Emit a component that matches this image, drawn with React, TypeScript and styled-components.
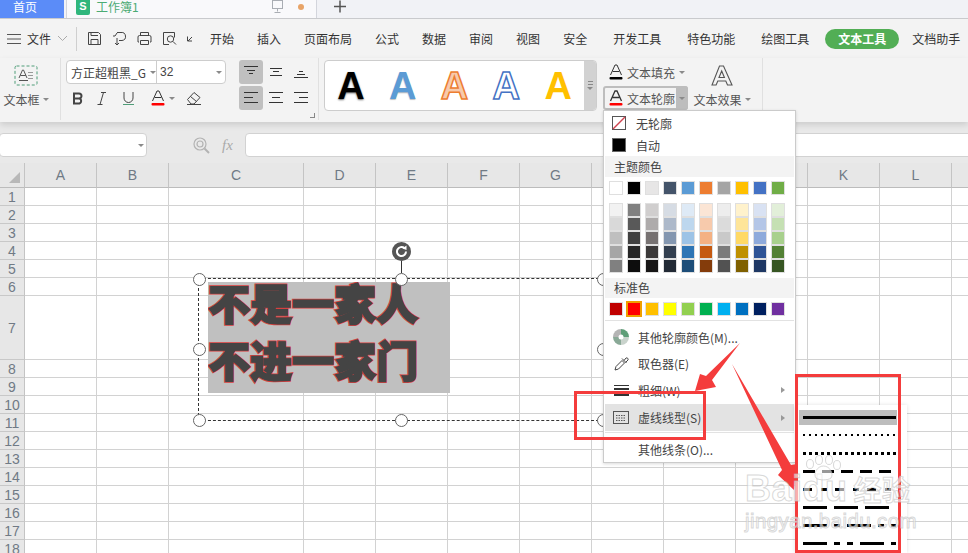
import React from 'react'
import styled, { createGlobalStyle } from 'styled-components'

const CJK = `"Noto Sans CJK SC", "Liberation Sans", sans-serif`

const GlobalStyle = createGlobalStyle`
  html, body { margin: 0; padding: 0; background: #fff; }
  * { box-sizing: border-box; }
`

const Root = styled.div`
  position: relative;
  width: 968px;
  height: 553px;
  overflow: hidden;
  background: #fff;
  font-family: ${CJK};
  font-size: 12px;
  color: #444;
`

/* title tabs */
const TabBar = styled.div`
  display: flex;
  height: 19px;
  background: #f1f2f6;
  border-bottom: 1px solid #c9cacd;
`
const HomeTab = styled.div`
  width: 64px;
  height: 18px;
  padding: 0 0 5px 13px;
  line-height: 13px;
  background: #5b8cf8;
  color: #fff;
  font-size: 12px;
`
const SheetTab = styled.div`
  display: flex;
  align-items: flex-start;
  width: 251px;
  height: 18px;
  margin-left: 2px;
  padding-left: 9px;
  background: #f9f9fb;
  border-left: 1px solid #d3d5dc;
  border-right: 1px solid #d3d5dc;
`
const SheetBadge = styled.span`
  width: 14px;
  height: 15px;
  border-radius: 0 0 2px 2px;
  background: #2fb67c;
  color: #fff;
  font: 700 11px/13px "Liberation Sans", sans-serif;
  text-align: center;
`
const SheetName = styled.span`
  margin-left: 6px;
  line-height: 13px;
  color: #4cab74;
`
const TabStatus = styled.div`
  display: flex;
  align-items: center;
  gap: 13px;
  height: 14px;
  margin-left: auto;
  margin-right: 12px;
`
const Dot = styled.span`
  width: 6px;
  height: 6px;
  border-radius: 50%;
  background: #e8a468;
`
const AddTab = styled.div`
  margin-left: 16px;
  width: 14px;
`

/* menu line */
const MenuBar = styled.div`
  display: flex;
  align-items: center;
  height: 39px;
  padding-left: 7px;
  background: #f3f3f3;
  color: #333;
`
const FileLabel = styled.span`
  margin-left: 6px;
  margin-right: 6px;
`
const MenuRule = styled.span`
  width: 1px;
  height: 24px;
  margin: 0 10px 0 8px;
  background: #cfcfcf;
`
const QuickBar = styled.div`
  display: flex;
  align-items: center;
  gap: 10px;
  margin-right: 15px;
`
const MenuTabs = styled.div<{ $gap: number; $lead?: number }>`
  display: flex;
  align-items: center;
  gap: ${p => p.$gap}px;
  margin-left: ${p => p.$lead ?? 0}px;
`
const ActiveTab = styled.span`
  margin: 0 13px 0 16px;
  width: 74px;
  height: 20px;
  border-radius: 10px;
  background: #52ae55;
  color: #fff;
  font-weight: 700;
  line-height: 20px;
  text-align: center;
`

/* ribbon */
const Ribbon = styled.div`
  position: relative;
  z-index: 1;
  display: flex;
  height: 64px;
  background: #f3f3f3;
  box-shadow: 0 3px 6px rgba(0, 0, 0, 0.12);
`
const RibbonGroup = styled.div<{ $width: number; $pad?: number }>`
  position: relative;
  display: flex;
  width: ${p => p.$width}px;
  height: 62px;
  padding-left: ${p => p.$pad ?? 0}px;
  padding-top: 2px;
  border-right: 1px solid #e0e0e0;
`
const BigTool = styled.div<{ $width: number; $lead?: number }>`
  display: flex;
  flex-direction: column;
  align-items: center;
  width: ${p => p.$width}px;
  margin-left: ${p => p.$lead ?? 0}px;
  padding-top: 5px;
  color: #555;
`
const BigLabel = styled.div`
  display: flex;
  align-items: center;
  gap: 3px;
  margin-top: 4px;
  height: 18px;
  white-space: nowrap;
`
const Caret = styled.span`
  flex: none;
  width: 0;
  height: 0;
  border-left: 3px solid transparent;
  border-right: 3px solid transparent;
  border-top: 3px solid #8a8a8a;
`
const FontColumn = styled.div`
  display: flex;
  flex-direction: column;
  width: 160px;
`
const FontSelect = styled.div`
  display: flex;
  align-items: center;
  height: 24px;
  background: #fff;
  border: 1px solid #cdcdcd;
  border-radius: 4px;
  overflow: hidden;
`
const FontName = styled.div`
  display: flex;
  align-items: center;
  gap: 4px;
  width: 90px;
  height: 22px;
  padding-left: 4px;
  border-right: 1px solid #cdcdcd;
  white-space: nowrap;
  color: #444;
`
const FontSize = styled.div`
  display: flex;
  align-items: center;
  justify-content: space-between;
  flex: 1;
  height: 22px;
  padding: 0 3px 0 3px;
  font-family: "Liberation Sans", sans-serif;
`
const FontTools = styled.div`
  display: flex;
  align-items: center;
  height: 26px;
  margin-top: 1px;
  padding-left: 6px;
`
const FontTool = styled.span<{ $width: number }>`
  display: flex;
  align-items: center;
  gap: 3px;
  width: ${p => p.$width}px;
`
const AlignGrid = styled.div`
  display: grid;
  grid-template-columns: repeat(3, 25px);
  grid-auto-rows: 24px;
  row-gap: 2px;
  margin-left: 13px;
`
const AlignCell = styled.span<{ $on?: boolean }>`
  display: flex;
  align-items: center;
  justify-content: center;
  width: 24px;
  border-radius: 3px;
  background: ${p => (p.$on ? '#c0c0c0' : 'transparent')};
`
const Launcher = styled.span`
  position: absolute;
  right: 3px;
  bottom: 2px;
  width: 5px;
  height: 5px;
  border-right: 1px solid #888;
  border-bottom: 1px solid #888;
`
const Gallery = styled.div`
  display: flex;
  width: 273px;
  height: 51px;
  background: #fff;
  border: 1px solid #cdcdcd;
  border-radius: 4px;
  overflow: hidden;
`
const GalleryItem = styled.span<{ $fill: string; $stroke?: string; $shadow?: string }>`
  width: 52px;
  text-align: center;
  font: 700 38px/50px "Liberation Sans", sans-serif;
  color: ${p => p.$fill};
  -webkit-text-stroke: ${p => (p.$stroke ? `1.5px ${p.$stroke}` : '0')};
  text-shadow: ${p => p.$shadow ?? 'none'};
`
const GalleryScroll = styled.div`
  display: flex;
  flex-direction: column;
  align-items: center;
  justify-content: center;
  gap: 2px;
  margin-left: auto;
  width: 12px;
  background: #d2d2d2;
`
const GalleryBar = styled.span`
  width: 5px;
  height: 1px;
  background: #888;
`
const TextTools = styled.div`
  display: flex;
  flex-direction: column;
  gap: 2px;
  margin-left: 6px;
  width: 85px;
`
const TextTool = styled.div<{ $open?: boolean }>`
  display: flex;
  align-items: center;
  height: 24px;
  padding-left: 5px;
  border-radius: 3px;
  box-shadow: ${p => (p.$open ? 'inset 0 0 0 2px #bdbdbd' : 'none')};
  color: #555;
  white-space: nowrap;
`
const TextToolIcon = styled.span`
  display: flex;
  flex: none;
  width: 16px;
`
const TextToolLabel = styled.span`
  flex: none;
  width: 48px;
  margin-left: 3px;
  margin-right: 1px;
`
const CaretBox = styled.span<{ $open?: boolean }>`
  display: flex;
  align-items: center;
  justify-content: center;
  flex: none;
  width: 12px;
  height: 24px;
  border-radius: 0 3px 3px 0;
  background: ${p => (p.$open ? '#bdbdbd' : 'transparent')};
`

/* formula line */
const FormulaBar = styled.div`
  display: flex;
  align-items: center;
  height: 41px;
  padding-top: 5px;
  background: #e9e9e9;
`
const NameBox = styled.div`
  display: flex;
  align-items: center;
  justify-content: flex-end;
  flex: none;
  width: 148px;
  height: 24px;
  margin-left: -1px;
  padding-right: 2px;
  background: #fff;
  border: 1px solid #d2d2d2;
  border-radius: 4px;
`
const FxLabel = styled.span`
  flex: none;
  width: 15px;
  margin: 0 8px 0 12px;
  color: #a9a9a9;
  font: italic 15px "Liberation Serif", serif;
`
const FormulaInput = styled.div`
  flex: 1;
  height: 24px;
  margin-right: -4px;
  background: #fff;
  border: 1px solid #d2d2d2;
  border-radius: 4px;
`
const ZoomIcon = styled.span`
  display: flex;
  flex: none;
  margin-left: 46px;
`

/* sheet */
const COLS = ['A', 'B', 'C', 'D', 'E', 'F', 'G', 'H', 'I', 'J', 'K', 'L', 'M']
const ROWS = Array.from({ length: 18 }, (_, i) => i + 1)

const Sheet = styled.div`
  display: grid;
  grid-template-columns: 25px 72px 72px 135px repeat(10, 72px);
  grid-template-rows: 25px repeat(6, 18px) 64px repeat(11, 18px);
  font-family: "Liberation Sans", sans-serif;
`
const Corner = styled.div`
  display: flex;
  align-items: flex-end;
  justify-content: flex-end;
  padding: 0 4px 4px 0;
  background: #e7e7e7;
  border-right: 1px solid #c4c4c4;
  border-bottom: 1px solid #bcbcbc;
`
const CornerMark = styled.span`
  width: 0;
  height: 0;
  border-left: 11px solid transparent;
  border-bottom: 11px solid #b8b8b8;
`
const ColHead = styled.div`
  background: #e7e7e7;
  border-right: 1px solid #c4c4c4;
  border-bottom: 1px solid #bcbcbc;
  color: #707a85;
  font-size: 14px;
  line-height: 24px;
  text-align: center;
`
const RowHead = styled.div`
  background: #e7e7e7;
  border-right: 1px solid #c4c4c4;
  border-bottom: 1px solid #c8c8c8;
  color: #707a85;
  font-size: 14px;
  display: flex;
  align-items: center;
  justify-content: center;
`
const Cell = styled.div`
  border-right: 1px solid #d2d2d2;
  border-bottom: 1px solid #d2d2d2;
`

/* text box on the sheet */
const ShapeBox = styled.div`
  position: absolute;
  left: 198px;
  top: 278px;
  width: 406px;
  height: 143px;
  border: 1px dashed #333;
`
const ShapeText = styled.div`
  position: absolute;
  left: 9px;
  top: 3px;
  width: 242px;
  height: 111px;
  background: #c0c0c0;
  overflow: hidden;
`
const ShapeLine = styled.div`
  position: relative;
  height: 57px;
  margin-top: -9px;
  margin-bottom: 9px;
  font: 900 42px/57px "Noto Sans CJK SC", sans-serif;
  color: #d8403f;
  -webkit-text-stroke: 3px #d8403f;
  white-space: nowrap;

  &::after {
    content: attr(data-text);
    position: absolute;
    left: 0;
    top: 0;
    color: #444;
    -webkit-text-stroke: 1.5px #444;
  }
`
const Handle = styled.span<{ $x: number; $y: number }>`
  position: absolute;
  left: ${p => p.$x}%;
  top: ${p => p.$y}%;
  width: 13px;
  height: 13px;
  margin: -6.5px 0 0 -6.5px;
  border-radius: 50%;
  background: #fff;
  border: 1.5px solid #666;
`
const RotateStem = styled.span`
  position: absolute;
  left: 202px;
  top: -18px;
  width: 1px;
  height: 12px;
  background: #333;
`
const RotateHandle = styled.span`
  position: absolute;
  left: 193px;
  top: -37px;
  display: flex;
  width: 19px;
  height: 19px;
`

/* outline menu */
const Menu = styled.div`
  position: absolute;
  z-index: 3;
  left: 603px;
  top: 110px;
  width: 193px;
  height: 353px;
  padding: 1px;
  background: #fff;
  border: 1px solid #cbcbcb;
  box-shadow: 0 1px 3px rgba(0, 0, 0, 0.15);
  color: #444;
`
const TopItem = styled.div`
  display: flex;
  align-items: center;
  gap: 10px;
  height: 22px;
  padding-left: 7px;
`
const SectionHead = styled.div<{ $h: number }>`
  height: ${p => p.$h}px;
  padding-left: 9px;
  line-height: ${p => p.$h}px;
  background: #f3f3f3;
`
const SwatchRow = styled.div<{ $top: number; $bottom: number }>`
  display: grid;
  grid-template-columns: repeat(10, 14px);
  column-gap: 4px;
  margin: ${p => p.$top}px 0 ${p => p.$bottom}px 4px;
`
const TintGrid = styled.div`
  display: grid;
  grid-auto-flow: column;
  grid-template-columns: repeat(10, 14px);
  grid-template-rows: repeat(5, 14px);
  column-gap: 4px;
  margin: 0 0 5px 4px;
`
const Swatch = styled.span<{ $color: string; $picked?: boolean }>`
  height: 14px;
  background: ${p => p.$color};
  border: 1px solid ${p => (p.$picked ? '#f0a000' : '#dfdfdf')};
  outline: ${p => (p.$picked ? '1px solid #f0a000' : 'none')};
`
const MenuRuleLine = styled.div<{ $top: number; $bottom: number }>`
  height: 1px;
  margin: ${p => p.$top}px 0 ${p => p.$bottom}px;
  background: #e2e2e2;
`
const ActionItem = styled.div<{ $h?: number; $on?: boolean }>`
  display: flex;
  align-items: center;
  height: ${p => p.$h ?? 26}px;
  padding: 0 9px 0 8px;
  background: ${p => (p.$on ? '#e3e3e3' : 'transparent')};
`
const ActionIcon = styled.span`
  display: flex;
  justify-content: center;
  width: 16px;
  margin-right: 9px;
`
const SubArrow = styled.span`
  margin-left: auto;
  width: 0;
  height: 0;
  border-top: 3px solid transparent;
  border-bottom: 3px solid transparent;
  border-left: 4px solid #999;
`

/* dash submenu */
const DashMenu = styled.div`
  position: absolute;
  z-index: 4;
  left: 795px;
  top: 405px;
  width: 112px;
  height: 148px;
  padding: 3px 0 0 4px;
  background: #fff;
  box-shadow: 0 0 4px rgba(0, 0, 0, 0.12);
`
const DashRow = styled.div<{ $on?: boolean }>`
  display: flex;
  align-items: center;
  width: 98px;
  height: 18px;
  padding-left: 4px;
  background: ${p => (p.$on ? 'linear-gradient(#bdbdbd, #bdbdbd) left center / 100% 15px no-repeat' : 'none')};
`

/* annotations over the screenshot */
const RedFrame = styled.div<{ $x: number; $y: number; $w: number; $h: number }>`
  position: absolute;
  z-index: 5;
  left: ${p => p.$x}px;
  top: ${p => p.$y}px;
  width: ${p => p.$w}px;
  height: ${p => p.$h}px;
  border: 3px solid #f43c3c;
`
const ArrowLayer = styled.svg`
  position: absolute;
  z-index: 6;
  left: 0;
  top: 0;
`
const Watermark = styled.div`
  position: absolute;
  z-index: 7;
  left: 745px;
  top: 452px;
  width: 176px;
  pointer-events: none;
`
const MarkLine = styled.div`
  display: flex;
  align-items: baseline;
  height: 57px;
  padding-top: 17px;
  color: rgba(255, 255, 255, 0.6);
  -webkit-text-stroke: 1px rgba(190, 190, 190, 0.6);
  font: 700 36px/40px "Liberation Sans", sans-serif;
  letter-spacing: 0.5px;
`
const MarkCjk = styled.span`
  margin-left: 6px;
  font: 700 28px/40px "Noto Sans CJK SC", sans-serif;
`
const MarkUrl = styled.div`
  color: rgba(255, 255, 255, 0.6);
  -webkit-text-stroke: 1px rgba(190, 190, 190, 0.6);
  font: 400 20.5px/24px "Liberation Sans", sans-serif;
  letter-spacing: 0.4px;
  white-space: nowrap;
`
const MarkPaw = styled.svg`
  position: absolute;
  left: 60px;
  top: 3px;
`

const Ico = ({ w = 15, h = 15, children }: { w?: number; h?: number; children: React.ReactNode }) => (
  <svg width={w} height={h} viewBox={`0 0 ${w} ${h}`} fill="none" stroke="#444" strokeWidth="1">
    {children}
  </svg>
)

const AlignIcon = ({ rows }: { rows: number[][] }) => (
  <svg width="16" height="16" viewBox="0 0 16 16" stroke="#333" strokeWidth="1">
    {rows.map(([x1, x2, y], i) => (
      <line key={i} x1={x1} x2={x2} y1={y + 0.5} y2={y + 0.5} />
    ))}
  </svg>
)

const UnderA = ({ bar, outline }: { bar: string; outline?: boolean }) => (
  <svg width="16" height="18" viewBox="0 0 16 18" fill="none">
    <path d="M2.5 12 L7 2 h2 L13.5 12 M4.7 8.5 h6.6" stroke="#333" strokeWidth={outline ? 1.3 : 1} />
    <rect x="1.5" y="14" width="13" height="2.5" rx="1" fill={bar} />
  </svg>
)

const THEME = ['#ffffff', '#000000', '#e7e6e6', '#44546a', '#5b9bd5', '#ed7d31', '#a5a5a5', '#ffc000', '#4472c4', '#70ad47']
const TINTS = [
  ['#f2f2f2', '#d9d9d9', '#bfbfbf', '#a6a6a6', '#808080'],
  ['#808080', '#595959', '#404040', '#262626', '#0d0d0d'],
  ['#d0cece', '#aeabab', '#767171', '#3a3838', '#171616'],
  ['#d6dce4', '#adb9ca', '#8497b0', '#333f4f', '#222a35'],
  ['#deeaf6', '#bdd7ee', '#9dc3e6', '#2e75b5', '#1e4e79'],
  ['#fbe5d5', '#f7caac', '#f4b183', '#c55a11', '#843c0b'],
  ['#ededed', '#dbdbdb', '#c9c9c9', '#7b7b7b', '#525252'],
  ['#fff2cc', '#fee599', '#ffd965', '#bf9000', '#7f6000'],
  ['#d9e2f3', '#b4c6e7', '#8eaadb', '#2f5496', '#1f3864'],
  ['#e2efd9', '#c5e0b3', '#a8d08d', '#538135', '#375623'],
]
const STANDARD = ['#c00000', '#ff0000', '#ffc000', '#ffff00', '#92d050', '#00b050', '#00b0f0', '#0070c0', '#002060', '#7030a0']
const DASHES: { dash?: string; h: number }[] = [
  { h: 3 },
  { dash: '2 4', h: 2 },
  { dash: '3 3', h: 3 },
  { dash: '12 7', h: 3 },
  { dash: '9 9 6 8', h: 3 },
  { dash: '24 7', h: 3 },
  { dash: '24 7 6 7', h: 3 },
  { dash: '24 7 6 7 6 7', h: 3 },
]
const HANDLES = [
  [0, 0], [50, 0], [100, 0],
  [0, 50], [100, 50],
  [0, 100], [50, 100], [100, 100],
]
const SHAPE_LINES = ['不是一家人', '不进一家门']

export default function App() {
  return (
    <Root>
      <GlobalStyle />
      <TabBar>
        <HomeTab>首页</HomeTab>
        <SheetTab>
          <SheetBadge>S</SheetBadge>
          <SheetName>工作簿1</SheetName>
          <TabStatus>
            <svg width="14" height="14" viewBox="0 0 14 14" fill="none" stroke="#a9adb3">
              <rect x="1.5" y="0.5" width="10" height="8" />
              <path d="M6.5 8.5 v3 M3.5 12.5 h6" />
            </svg>
            <Dot />
          </TabStatus>
        </SheetTab>
        <AddTab>
          <svg width="14" height="14" viewBox="0 0 14 14" stroke="#555" strokeWidth="1.5">
            <path d="M7 0.5 v12 M1 6.5 h12" />
          </svg>
        </AddTab>
      </TabBar>

      <MenuBar>
        <Ico w={14} h={12}><path d="M0 1.5 h14 M0 6 h14 M0 10.5 h14" stroke="#555" /></Ico>
        <FileLabel>文件</FileLabel>
        <Ico w={11} h={7}><path d="M1 1 L5.5 5.5 L10 1" stroke="#aaa" /></Ico>
        <MenuRule />
        <QuickBar>
          <Ico><path d="M1.5 1.5 h10 l2 2 v10 h-12 z M4 13.5 v-5 h7 v5 M4 1.5 v3 h7" /></Ico>
          <Ico><path d="M1 5 h2 l2 -3 M5 1.5 h4 a4 4 0 0 1 1 8 h-3 M5 7 v7 M3 12 l2 2 l2 -2" /></Ico>
          <Ico><path d="M3.5 4.5 v-3 h8 v3 M2 11 h-1 v-5 a1.5 1.5 0 0 1 1.5 -1.5 h10 a1.5 1.5 0 0 1 1.5 1.5 v5 h-1 M3.5 9.5 h8 v4 h-8 z" /></Ico>
          <Ico><path d="M7 13.5 h-5.5 v-12 h11 v5" /><circle cx="8.5" cy="8" r="3.2" /><path d="M11 10.5 l3 3" /></Ico>
          <Ico w={8} h={8}><path d="M0.5 1.5 v4.5 h4.5 M1 6 l4 -4" /></Ico>
        </QuickBar>
        <MenuTabs $gap={23}>
          <span>开始</span>
          <span>插入</span>
          <span>页面布局</span>
          <span>公式</span>
          <span>数据</span>
          <span>审阅</span>
          <span>视图</span>
          <span>安全</span>
        </MenuTabs>
        <MenuTabs $gap={26} $lead={26}>
          <span>开发工具</span>
          <span>特色功能</span>
          <span>绘图工具</span>
        </MenuTabs>
        <ActiveTab>文本工具</ActiveTab>
        <span>文档助手</span>
      </MenuBar>

      <Ribbon>
        <RibbonGroup $width={61}>
          <BigTool $width={52}>
            <svg width="24" height="21" viewBox="0 0 24 21" fill="none">
              <rect x="1" y="1" width="22" height="19" rx="1.5" stroke="#4f9d78" strokeDasharray="3 2" />
              <path d="M5 13 L8.5 5 h1 L13 13 M6.3 10.5 h5.5" stroke="#555" />
              <path d="M14 7.5 h5 M14 10.5 h5 M14 13.5 h5" stroke="#999" />
              <path d="M5 15.5 h9" stroke="#555" />
            </svg>
            <BigLabel>文本框<Caret /></BigLabel>
          </BigTool>
        </RibbonGroup>

        <RibbonGroup $width={258} $pad={5}>
          <FontColumn>
            <FontSelect>
              <FontName>方正超粗黑_G<Caret /></FontName>
              <FontSize>32<Caret /></FontSize>
            </FontSelect>
            <FontTools>
              <FontTool $width={25}>
                <Ico w={12} h={13}><path d="M2 1.5 h5 a2.5 2.5 0 0 1 0 5 h-5 z M2 6.5 h5.5 a2.7 2.7 0 0 1 0 5 h-5.5 z" stroke="#444" strokeWidth="2" /></Ico>
              </FontTool>
              <FontTool $width={25}>
                <Ico w={10} h={13}><path d="M3 12.5 L6.5 0.5 M4 0.5 h5 M0.5 12.5 h5" /></Ico>
              </FontTool>
              <FontTool $width={28}>
                <svg width="13" height="15" viewBox="0 0 13 15" fill="none">
                  <path d="M2 1 v6 a4.5 4.5 0 0 0 9 0 v-6" stroke="#444" />
                  <path d="M1 13.5 h11" stroke="#4f9d78" />
                </svg>
              </FontTool>
              <FontTool $width={36}>
                <UnderA bar="#f00" />
                <Caret />
              </FontTool>
              <Ico w={16} h={14}>
                <path d="M1.5 8.5 L8 1.5 L14 6.5 L8 13 H5 Z M4.5 5.5 L10.5 10.5 M1 13.5 h14" />
              </Ico>
            </FontTools>
          </FontColumn>
          <AlignGrid>
            <AlignCell $on><AlignIcon rows={[[1, 15, 2], [4, 12, 6], [6, 10, 9]]} /></AlignCell>
            <AlignCell><AlignIcon rows={[[2, 14, 4], [5, 11, 7], [2, 14, 11]]} /></AlignCell>
            <AlignCell><AlignIcon rows={[[6, 10, 7], [4, 12, 10], [1, 15, 13]]} /></AlignCell>
            <AlignCell $on><AlignIcon rows={[[1, 15, 2], [1, 10, 7], [1, 15, 12]]} /></AlignCell>
            <AlignCell><AlignIcon rows={[[1, 15, 2], [4, 12, 7], [1, 15, 12]]} /></AlignCell>
            <AlignCell><AlignIcon rows={[[1, 15, 2], [6, 15, 7], [1, 15, 12]]} /></AlignCell>
          </AlignGrid>
          <Launcher />
        </RibbonGroup>

        <RibbonGroup $width={444} $pad={5}>
          <Gallery>
            <GalleryItem $fill="#000" $shadow="0 1px 2px rgba(0,0,0,.6)">A</GalleryItem>
            <GalleryItem $fill="#5b9bd5" $shadow="0 1px 1px rgba(0,0,0,.25)">A</GalleryItem>
            <GalleryItem $fill="#f7caac" $stroke="#ed7d31">A</GalleryItem>
            <GalleryItem $fill="#fff" $stroke="#4472c4">A</GalleryItem>
            <GalleryItem $fill="#ffc000">A</GalleryItem>
            <GalleryScroll>
              <GalleryBar />
              <GalleryBar />
              <Caret />
            </GalleryScroll>
          </Gallery>
          <TextTools>
            <TextTool>
              <TextToolIcon><UnderA bar="#000" /></TextToolIcon>
              <TextToolLabel>文本填充</TextToolLabel>
              <CaretBox><Caret /></CaretBox>
            </TextTool>
            <TextTool $open>
              <TextToolIcon><UnderA bar="#f00" outline /></TextToolIcon>
              <TextToolLabel>文本轮廓</TextToolLabel>
              <CaretBox $open><Caret /></CaretBox>
            </TextTool>
          </TextTools>
          <BigTool $width={64} $lead={2}>
            <svg width="22" height="21" viewBox="0 0 22 21" fill="none" stroke="#555" strokeWidth="1.1">
              <path d="M1 20 L8.5 1 h4 L21 20 h-4.5 l-1.7 -4 h-8 l-1.7 4 Z M8 12.5 h5.4 L10.7 6 Z" />
            </svg>
            <BigLabel>文本效果<Caret /></BigLabel>
          </BigTool>
        </RibbonGroup>
      </Ribbon>

      <FormulaBar>
        <NameBox><Caret /></NameBox>
        <ZoomIcon>
          <svg width="17" height="17" viewBox="0 0 17 17" fill="none" stroke="#b3b3b3" strokeWidth="1.2">
            <circle cx="7" cy="7" r="6" />
            <circle cx="7" cy="7" r="3" />
            <path d="M11.5 11.5 L16 16" strokeWidth="2" />
          </svg>
        </ZoomIcon>
        <FxLabel>fx</FxLabel>
        <FormulaInput />
      </FormulaBar>

      <Sheet>
        <Corner><CornerMark /></Corner>
        {COLS.map(c => <ColHead key={c}>{c}</ColHead>)}
        {ROWS.map(r => (
          <React.Fragment key={r}>
            <RowHead>{r}</RowHead>
            {COLS.map(c => <Cell key={c} />)}
          </React.Fragment>
        ))}
      </Sheet>

      <ShapeBox>
        <RotateStem />
        <RotateHandle>
          <svg width="19" height="19" viewBox="0 0 19 19" fill="none">
            <circle cx="9.5" cy="9.5" r="9.5" fill="#555" />
            <path d="M14 9.5 a4.5 4.5 0 1 1 -1.6 -3.4" stroke="#fff" strokeWidth="2" />
            <path d="M10.5 6.5 L14.5 8 L14.5 3.5 Z" fill="#fff" />
          </svg>
        </RotateHandle>
        <ShapeText>
          {SHAPE_LINES.map(line => (
            <ShapeLine key={line} data-text={line}>{line}</ShapeLine>
          ))}
        </ShapeText>
        {HANDLES.map(([x, y]) => <Handle key={`${x}-${y}`} $x={x} $y={y} />)}
      </ShapeBox>

      <Menu>
        <TopItem>
          <svg width="14" height="14" viewBox="0 0 14 14" fill="none">
            <rect x="0.5" y="0.5" width="13" height="13" stroke="#555" />
            <path d="M1 13 L13 1" stroke="#cf4450" strokeWidth="1.4" />
          </svg>
          <span>无轮廓</span>
        </TopItem>
        <TopItem>
          <svg width="14" height="14" viewBox="0 0 14 14">
            <rect x="0.5" y="0.5" width="13" height="13" fill="#000" stroke="#666" />
          </svg>
          <span>自动</span>
        </TopItem>
        <SectionHead $h={21}>主题颜色</SectionHead>
        <SwatchRow $top={4} $bottom={8}>
          {THEME.map(c => <Swatch key={c} $color={c} />)}
        </SwatchRow>
        <TintGrid>
          {TINTS.flat().map((c, i) => <Swatch key={i} $color={c} />)}
        </TintGrid>
        <SectionHead $h={20}>标准色</SectionHead>
        <SwatchRow $top={4} $bottom={0}>
          {STANDARD.map(c => <Swatch key={c} $color={c} $picked={c === '#ff0000'} />)}
        </SwatchRow>
        <MenuRuleLine $top={4} $bottom={3} />
        <ActionItem>
          <ActionIcon>
            <svg width="16" height="16" viewBox="0 0 16 16">
              <path d="M8 8 V0 A8 8 0 0 1 16 8 Z" fill="#5f9e78" />
              <path d="M8 8 H16 A8 8 0 0 1 8 16 Z" fill="#c9d3cc" />
              <path d="M8 8 V16 A8 8 0 0 1 0 8 Z" fill="#8aa997" />
              <path d="M8 8 H0 A8 8 0 0 1 8 0 Z" fill="#b5b5b5" />
              <circle cx="8" cy="8" r="2.5" fill="#fff" />
            </svg>
          </ActionIcon>
          其他轮廓颜色(M)...
        </ActionItem>
        <ActionItem>
          <ActionIcon>
            <Ico w={15} h={15}><path d="M1 14 L2 10.5 L8 4.5 L10.5 7 L4.5 13 Z M8 2.5 L12.5 7 M10 4.5 L12 2 a1.5 1.5 0 0 1 2 2 L11.5 6.5" /></Ico>
          </ActionIcon>
          取色器(E)
        </ActionItem>
        <ActionItem $h={28}>
          <ActionIcon>
            <svg width="15" height="11" viewBox="0 0 15 11">
              <rect y="0" width="15" height="1" fill="#333" />
              <rect y="3" width="15" height="2" fill="#333" />
              <rect y="7" width="15" height="4" fill="#333" />
            </svg>
          </ActionIcon>
          粗细(W)
          <SubArrow />
        </ActionItem>
        <ActionItem $h={27} $on>
          <ActionIcon>
            <svg width="16" height="13" viewBox="0 0 16 13" fill="none" stroke="#555">
              <rect x="0.5" y="0.5" width="15" height="12" />
              <path d="M3 4.5 h10 M3 7 h10 M3 9.5 h10" strokeDasharray="1.5 1" />
            </svg>
          </ActionIcon>
          虚线线型(S)
          <SubArrow />
        </ActionItem>
        <MenuRuleLine $top={1} $bottom={3} />
        <ActionItem>
          <ActionIcon />
          其他线条(O)...
        </ActionItem>
      </Menu>

      <DashMenu>
        {DASHES.map((d, i) => (
          <DashRow key={i} $on={i === 0}>
            <svg width="93" height={d.h} viewBox={`0 0 93 ${d.h}`}>
              <line x1="0" x2="93" y1={d.h / 2} y2={d.h / 2} stroke="#000" strokeWidth={d.h} strokeDasharray={d.dash} />
            </svg>
          </DashRow>
        ))}
      </DashMenu>

      <RedFrame $x={574} $y={391} $w={132} $h={49} />
      <RedFrame $x={795} $y={374} $w={106} $h={179} />

      <ArrowLayer width="968" height="553" viewBox="0 0 968 553" fill="#f43c3c">
        <path d="M740 343 L706 376 L700 374 L695 391 L716 387 L712 380 Z" />
        <path d="M732 364 L782 470 L778 475 L794 490 L797 464 L791 465 Z" />
      </ArrowLayer>

      <Watermark>
        <MarkPaw width="37" height="26" viewBox="0 0 37 26" fill="rgba(255,255,255,.6)" stroke="rgba(190,190,190,.6)">
          <ellipse cx="5" cy="9" rx="3.5" ry="4.5" />
          <ellipse cx="14" cy="5" rx="3.5" ry="4.5" />
          <ellipse cx="24" cy="5" rx="3.5" ry="4.5" />
          <ellipse cx="32" cy="10" rx="3.5" ry="4.5" />
          <path d="M18.5 11 C12 11 8 19 11 23 C14 25.5 23 25.5 26 23 C29 19 25 11 18.5 11 Z" />
        </MarkPaw>
        <MarkLine>
          <span>Baidu</span>
          <MarkCjk>经验</MarkCjk>
        </MarkLine>
        <MarkUrl>jingyan.baidu.com</MarkUrl>
      </Watermark>
    </Root>
  )
}
